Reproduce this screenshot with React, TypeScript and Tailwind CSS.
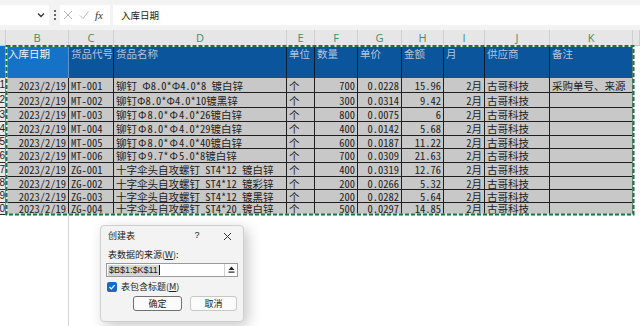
import React from "react";

const W = ["w-[6px]", "w-[63px]", "w-[45px]", "w-[173px]", "w-[28px]", "w-[43px]", "w-[44px]", "w-[42px]", "w-[41px]", "w-[65px]", "w-[83px]", "w-[7px]"];
const LETTERS = ["", "B", "C", "D", "E", "F", "G", "H", "I", "J", "K", ""];
const HEAD = ["", "入库日期", "货品代号", "货品名称", "单位", "数量", "单价", "金额", "月", "供应商", "备注", ""];
const RIGHT = [false, true, false, false, false, true, true, true, true, false, false, false];
const RH = ["h-[15px]", "h-[15px]", "h-[14px]", "h-[14px]", "h-[13px]", "h-[14px]", "h-[14px]", "h-[13px]", "h-[13px]", "h-[12px]"];

const F = "Φ";
const WF = <span className="inline-block w-[1em] text-center">Φ</span>;

const rows: { n: string; code: string; name: React.ReactNode; qty: string; price: string; amt: string; note?: string }[] = [
  { n: "1", code: "MT-001", name: <>铆钉 {F}8.0*{F}4.0*8 镀白锌</>, qty: "700", price: "0.0228", amt: "15.96", note: "采购单号、来源" },
  { n: "2", code: "MT-002", name: <>铆钉{F}8.0*{F}4.0*10镀黑锌</>, qty: "300", price: "0.0314", amt: "9.42" },
  { n: "3", code: "MT-003", name: <>铆钉{WF}8.0*{WF}4.0*26镀白锌</>, qty: "800", price: "0.0075", amt: "6" },
  { n: "4", code: "MT-004", name: <>铆钉{WF}8.0*{WF}4.0*29镀白锌</>, qty: "400", price: "0.0142", amt: "5.68" },
  { n: "5", code: "MT-005", name: <>铆钉{WF}8.0*{WF}4.0*40镀白锌</>, qty: "600", price: "0.0187", amt: "11.22" },
  { n: "6", code: "MT-006", name: <>铆钉{WF}9.7*{WF}5.0*8镀白锌</>, qty: "700", price: "0.0309", amt: "21.63" },
  { n: "7", code: "ZG-001", name: <>十字伞头自攻螺钉 ST4*12 镀白锌</>, qty: "400", price: "0.0319", amt: "12.76" },
  { n: "8", code: "ZG-002", name: <>十字伞头自攻螺钉 ST4*12 镀彩锌</>, qty: "200", price: "0.0266", amt: "5.32" },
  { n: "9", code: "ZG-003", name: <>十字伞头自攻螺钉 ST4*12 镀黑锌</>, qty: "200", price: "0.0282", amt: "5.64" },
  { n: "0", code: "ZG-004", name: <>十字伞头自攻螺钉 ST4*20 镀白锌</>, qty: "500", price: "0.0297", amt: "14.85" },
];

export default function App() {
  return (
    <div className="relative w-[640px] h-[326px] overflow-hidden bg-white flex flex-col font-['Noto_Sans_CJK_SC',sans-serif]">
      {/* formula bar */}
      <div className="h-[30px] shrink-0 bg-[#f3f3f3] flex items-start pt-[5px]">
        <div className="w-[49px] h-[20px] bg-white flex items-center justify-end pr-[4px]">
          <svg width="8" height="6" viewBox="0 0 8 6"><path d="M1 1.5 L4 4.5 L7 1.5" fill="none" stroke="#333" strokeWidth="1.3" /></svg>
        </div>
        <div className="w-[11px] h-[20px] flex items-center justify-center">
          <div className="flex flex-col gap-[2px]">
            <div className="w-[2px] h-[2px] bg-[#666]" />
            <div className="w-[2px] h-[2px] bg-[#666]" />
            <div className="w-[2px] h-[2px] bg-[#666]" />
          </div>
        </div>
        <div className="w-[50px] h-[20px] bg-white flex items-center pl-[3px] gap-[6px]">
          <svg width="10" height="10" viewBox="0 0 10 10"><path d="M1 1 L9 9 M9 1 L1 9" stroke="#b8b8b8" strokeWidth="1" /></svg>
          <svg width="10" height="10" viewBox="0 0 10 10"><path d="M1 5.5 L4 8.5 L9.5 1.5" fill="none" stroke="#b8b8b8" strokeWidth="1" /></svg>
          <span className="text-[11px] italic font-['Liberation_Serif',serif] text-[#333] leading-none">fx</span>
        </div>
        <div className="w-[3px]" />
        <div className="flex-1 h-[20px] bg-white flex items-center pl-[8px] text-[9.5px] text-[#222]">入库日期</div>
      </div>

      {/* column letters */}
      <div className="h-[16px] shrink-0 flex bg-[#e6e6e6] border-b border-[#c9c9c9]">
        {LETTERS.map((l, i) => (
          <div key={i} className={`${W[i]} shrink-0 h-full border-r border-[#cfcfcf] flex items-center justify-center text-[11px] leading-none text-[#3f8f5f] font-['Open_Sans',sans-serif]`}>{l}</div>
        ))}
      </div>

      {/* header row */}
      <div className="h-[32px] shrink-0 flex">
        {HEAD.map((h, i) => {
          if (i === 11) return <div key={i} className={`${W[i]} shrink-0 bg-white`} />;
          const active = i <= 1;
          return (
            <div
              key={i}
              className={`${W[i]} shrink-0 h-full px-[2px] pt-[1px] text-[10.5px] leading-[14px] whitespace-nowrap overflow-hidden border-r ${active ? "bg-[#1572c6] text-[#f2f6fb] border-[#5d93c8]" : "bg-[#0b559d] text-[#b3c4da] border-[#0c1a2a]"}`}
            >
              {h}
            </div>
          );
        })}
      </div>

      {/* data rows */}
      {rows.map((r, ri) => {
        const cells = [r.n, "2023/2/19", r.code, r.name, "个", r.qty, r.price, r.amt, "2月", "古哥科技", r.note ?? "", ""];
        return (
          <div key={ri} className={`${RH[ri]} shrink-0 flex`}>
            {cells.map((c, i) => {
              if (i === 11) return <div key={i} className={`${W[i]} shrink-0 bg-white`} />;
              if (i === 0)
                return (
                  <div key={i} className={`${W[i]} shrink-0 h-full bg-[#e8e8e8] border-r border-b border-[#2a2a2a] flex items-center justify-end overflow-hidden text-[10px] leading-none text-[#222] font-['Liberation_Sans',sans-serif]`}>
                    {c}
                  </div>
                );
              return (
                <div
                  key={i}
                  className={`${W[i]} shrink-0 h-full bg-[#c8c8c8] border-r border-b border-[#1f1f1f] flex items-center px-[2px] overflow-visible whitespace-nowrap text-[10.5px] leading-[11px] text-[#222] font-['Noto_Sans_Mono_CJK_SC','Liberation_Mono','Noto_Sans_CJK_SC',monospace] ${RIGHT[i] ? "justify-end" : "justify-start"}`}
                >
                  {c}
                </div>
              );
            })}
          </div>
        );
      })}

      {/* below area */}
      <div className="flex-1 flex">
        <div className="w-[69px] shrink-0 border-r border-[#d4d4d4]" />
        <div className="flex-1" />
      </div>

      {/* marquee */}
      <svg className="absolute left-0 top-0 pointer-events-none" width="640" height="326">
        <rect x="6.5" y="46" width="627" height="168.5" fill="none" stroke="#d8efe2" strokeWidth="2" />
        <rect x="6.5" y="46" width="627" height="168.5" fill="none" stroke="#1d7346" strokeWidth="2" strokeDasharray="4 2" />
      </svg>

      {/* dialog */}
      <div className="absolute left-[100px] top-[225px] w-[144px] h-[97px] bg-[#f3f3f3] border border-[#cfcfcf] rounded-[4px] shadow-[4px_4px_14px_rgba(0,0,0,0.22)] flex flex-col px-[5px] text-[9px] text-[#222] font-['Noto_Sans_CJK_SC',sans-serif]">
        <div className="h-[20px] flex items-center pl-[2px]">
          <span className="flex-1">创建表</span>
          <span className="w-[10px] text-center mr-[21px] font-['Liberation_Sans',sans-serif]">?</span>
          <svg width="9" height="9" viewBox="0 0 9 9" className="mr-[6px]"><path d="M1 1 L8 8 M8 1 L1 8" stroke="#333" strokeWidth="1" /></svg>
        </div>
        <div className="h-[17px] flex items-end pl-[2px] pb-[2px]">
          表数据的来源(<span className="underline">W</span>):
        </div>
        <div className="h-[14px] bg-white border border-[#9a9a9a] flex items-center">
          <span className="ml-[1px] bg-[#d6d6d6] px-[1px] leading-[11px] text-[9px] font-['Liberation_Sans',sans-serif]">$B$1:$K$11</span>
          <span className="w-[1px] h-[10px] bg-[#111]" />
          <div className="flex-1" />
          <div className="w-[13px] h-full border-l border-[#d0d0d0] flex items-center justify-center">
            <svg width="7" height="8" viewBox="0 0 7 8"><path d="M3.5 0.5 L6.5 4 L0.5 4 Z" fill="#222" /><rect x="0.5" y="5.5" width="6" height="1.2" fill="#222" /></svg>
          </div>
        </div>
        <div className="h-[19px] flex items-center gap-[4px] pl-[1px]">
          <div className="w-[10px] h-[10px] rounded-[2px] bg-[#1869c4] flex items-center justify-center">
            <svg width="8" height="8" viewBox="0 0 8 8"><path d="M1.5 4 L3.3 5.8 L6.7 2.2" fill="none" stroke="#fff" strokeWidth="1.2" /></svg>
          </div>
          <span>表包含标题(<span className="underline">M</span>)</span>
        </div>
        <div className="flex gap-[8px] pl-[27px]">
          <div className="w-[49px] h-[15px] bg-[#fbfbfb] border border-[#707070] rounded-[3px] flex items-center justify-center">确定</div>
          <div className="w-[47px] h-[15px] bg-[#fbfbfb] border border-[#c8c8c8] rounded-[3px] flex items-center justify-center">取消</div>
        </div>
      </div>
    </div>
  );
}
